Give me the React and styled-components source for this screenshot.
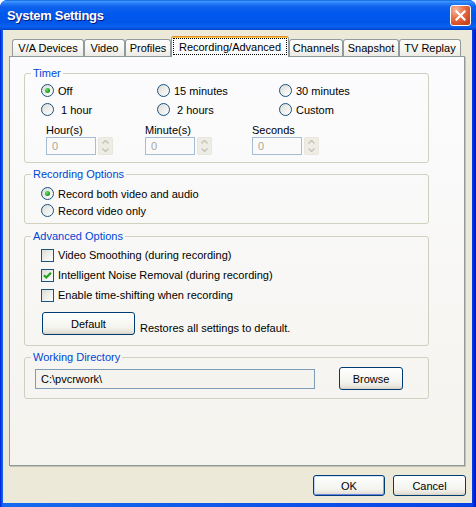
import React, { useState } from "react";
import styled, { createGlobalStyle, css } from "styled-components";

const GlobalStyle = createGlobalStyle`
  html, body { margin: 0; padding: 0; background: #fff; }
  body {
    font-family: "Liberation Sans", Arial, sans-serif;
    font-size: 11px;
    color: #000;
  }
  * { box-sizing: border-box; }
`;

const tabs = [
  { name: "V/A Devices", width: 72 },
  { name: "Video", width: 41 },
  { name: "Profiles", width: 46 },
  { name: "Recording/Advanced", width: 118 },
  { name: "Channels", width: 54 },
  { name: "Snapshot", width: 56 },
  { name: "TV Replay", width: 62 },
];

const timerOptions = [
  { id: "off", label: "Off" },
  { id: "15", label: "15 minutes" },
  { id: "30", label: "30 minutes" },
  { id: "1h", label: " 1 hour" },
  { id: "2h", label: " 2 hours" },
  { id: "custom", label: "Custom" },
];

const Radio = ({ checked, label, onClick }) => (
  <Option onClick={onClick}>
    <RadioCircle $checked={checked} />
    <span>{label}</span>
  </Option>
);

const Check = ({ checked, label, onClick }) => (
  <Option onClick={onClick}>
    <CheckBox>
      {checked && (
        <svg width="11" height="11" viewBox="0 0 11 11">
          <path d="M2 5.2 L4.3 7.5 L9 2.8" fill="none" stroke="#21a121" strokeWidth="2.2" />
        </svg>
      )}
    </CheckBox>
    <span>{label}</span>
  </Option>
);

const Spin = ({ label }) => (
  <SpinField>
    <SpinLabel>{label}</SpinLabel>
    <SpinRow>
      <SpinInput disabled value="0" readOnly />
      <SpinBox>
        <SpinHalf>
          <svg width="7" height="4" viewBox="0 0 7 4">
            <path d="M0.5 3.5 L3.5 0.5 L6.5 3.5" fill="none" stroke="#c6c3b4" strokeWidth="1.4" />
          </svg>
        </SpinHalf>
        <SpinHalf>
          <svg width="7" height="4" viewBox="0 0 7 4">
            <path d="M0.5 0.5 L3.5 3.5 L6.5 0.5" fill="none" stroke="#c6c3b4" strokeWidth="1.4" />
          </svg>
        </SpinHalf>
      </SpinBox>
    </SpinRow>
  </SpinField>
);

const App = () => {
  const [timer, setTimer] = useState("off");
  const [record, setRecord] = useState("both");
  const [checks, setChecks] = useState({ smooth: false, noise: true, shift: false });

  const toggle = (key) => setChecks({ ...checks, [key]: !checks[key] });

  return (
    <>
      <GlobalStyle />
      <Window>
        <TitleBar>
          <Title>System Settings</Title>
          <CloseButton>
            <svg width="11" height="11" viewBox="0 0 11 11">
              <path d="M1.5 1.5 L9.5 9.5 M9.5 1.5 L1.5 9.5" stroke="#fff" strokeWidth="2.2" strokeLinecap="square" />
            </svg>
          </CloseButton>
        </TitleBar>

        <Client>
          <TabStrip>
            {tabs.map((t) => (
              <Tab key={t.name} $width={t.width} $active={t.name === "Recording/Advanced"}>
                {t.name === "Recording/Advanced" ? <FocusText>{t.name}</FocusText> : t.name}
              </Tab>
            ))}
          </TabStrip>

          <Panel>
            <Group>
              <Legend>Timer</Legend>
              <GroupBody $pad="1px 0 7px 16px">
                <RadioGrid>
                  {timerOptions.map((o) => (
                    <Radio
                      key={o.id}
                      label={o.label}
                      checked={timer === o.id}
                      onClick={() => setTimer(o.id)}
                    />
                  ))}
                </RadioGrid>
                <SpinGrid>
                  <Spin label="Hour(s)" />
                  <Spin label="Minute(s)" />
                  <Spin label="Seconds" />
                </SpinGrid>
              </GroupBody>
            </Group>

            <Group $gap={5}>
              <Legend>Recording Options</Legend>
              <GroupBody $pad="4px 0 4px 16px">
                <Rows $row={17}>
                  <Radio
                    label="Record both video and audio"
                    checked={record === "both"}
                    onClick={() => setRecord("both")}
                  />
                  <Radio
                    label="Record video only"
                    checked={record === "video"}
                    onClick={() => setRecord("video")}
                  />
                </Rows>
              </GroupBody>
            </Group>

            <Group $gap={6}>
              <Legend>Advanced Options</Legend>
              <GroupBody $pad="2px 0 10px 16px">
                <Rows $row={20}>
                  <Check
                    label="Video Smoothing (during recording)"
                    checked={checks.smooth}
                    onClick={() => toggle("smooth")}
                  />
                  <Check
                    label="Intelligent Noise Removal (during recording)"
                    checked={checks.noise}
                    onClick={() => toggle("noise")}
                  />
                  <Check
                    label="Enable time-shifting when recording"
                    checked={checks.shift}
                    onClick={() => toggle("shift")}
                  />
                </Rows>
                <DefaultRow>
                  <Button $w={93} $h={23}>Default</Button>
                  <Hint>Restores all settings to default.</Hint>
                </DefaultRow>
              </GroupBody>
            </Group>

            <Group $gap={5}>
              <Legend>Working Directory</Legend>
              <GroupBody $pad="3px 0 8px 10px">
                <DirRow>
                  <DirInput value="C:\pvcrwork\" readOnly />
                  <Button $w={64} $h={23}>Browse</Button>
                </DirRow>
              </GroupBody>
            </Group>
          </Panel>

          <Footer>
            <Button $w={72} $h={21} $default>OK</Button>
            <Button $w={73} $h={21}>Cancel</Button>
          </Footer>
        </Client>
      </Window>
    </>
  );
};

export default App;

const Window = styled.div`
  width: 476px;
  height: 507px;
  display: flex;
  flex-direction: column;
  background: linear-gradient(to right, #0019cf 0, #0842e6 1px, #166aee 3px, #0842e6 472px, #0019cf 475px);
  border-radius: 7px 7px 0 0;
  overflow: hidden;
`;

const TitleBar = styled.div`
  height: 30px;
  flex: none;
  display: flex;
  align-items: center;
  justify-content: space-between;
  padding: 0 5px 0 7px;
  background: linear-gradient(
    to bottom,
    #0b5fd9 0%,
    #3d95ff 5%,
    #2b82fb 10%,
    #0e62ec 22%,
    #0058ee 45%,
    #0056e8 75%,
    #0861f0 88%,
    #0a52dc 95%,
    #003fc4 100%
  );
  border-radius: 7px 7px 0 0;
`;

const Title = styled.div`
  color: #fff;
  font-family: "Liberation Sans", Arial, sans-serif;
  font-weight: bold;
  font-size: 13px;
  letter-spacing: -0.3px;
  text-shadow: 1px 1px 0 #0a1883;
  padding-top: 1px;
`;

const CloseButton = styled.button`
  width: 21px;
  height: 21px;
  padding: 0;
  border: 1px solid #fff;
  border-radius: 3px;
  background: radial-gradient(circle at 25% 20%, #f8b79c 0%, #e8714a 40%, #d24a20 75%, #c03c16 100%);
  display: flex;
  align-items: center;
  justify-content: center;
`;

const Client = styled.div`
  flex: 1;
  margin: 0 4px 4px 3px;
  background: #ece9d8;
  padding: 6px 6px 0 6px;
  display: flex;
  flex-direction: column;
`;

const TabStrip = styled.div`
  display: flex;
  align-items: flex-end;
  height: 21px;
  padding-left: 3px;
  margin-bottom: -1px;
  position: relative;
  z-index: 1;
`;

const Tab = styled.div`
  width: ${(p) => p.$width}px;
  height: 17px;
  margin-bottom: 1px;
  border: 1px solid #919b9c;
  border-bottom: none;
  border-radius: 3px 3px 0 0;
  display: flex;
  align-items: center;
  justify-content: center;
  white-space: nowrap;
  background: linear-gradient(#ffffff, #f7f7f4 50%, #eceae4);

  ${(p) =>
    p.$active &&
    css`
      height: 21px;
      margin-bottom: 0;
      align-items: flex-start;
      padding-top: 1px;
      border-top: none;
      background: linear-gradient(#e68b2c 0, #e68b2c 1px, #ffc73c 1px, #ffc73c 2px, #fcfcfe 2px);
    `}
`;

const FocusText = styled.span`
  width: 114px;
  height: 17px;
  margin-top: 1px;
  border: 1px dotted #000;
  display: flex;
  align-items: center;
  justify-content: center;
`;

const Panel = styled.div`
  height: 410px;
  margin-right: 1px;
  border: 1px solid #919b9c;
  box-shadow: 1px 1px 0 #c5c2b2;
  background: linear-gradient(#fcfcfe, #f4f3ee);
  padding: 10px 0 0 14px;
  display: flex;
  flex-direction: column;
`;

const Group = styled.fieldset`
  width: 405px;
  min-width: 0;
  margin: ${(p) => p.$gap || 0}px 0 0 0;
  padding: 0;
  border: 1px solid #d0d0bf;
  border-radius: 3px;
`;

const Legend = styled.legend`
  color: #0046d5;
  margin-left: 6px;
  padding: 0 2px;
  line-height: 13px;
  font-size: 11px;
`;

const GroupBody = styled.div`
  padding: ${(p) => p.$pad};
  display: flex;
  flex-direction: column;
`;

const RadioGrid = styled.div`
  display: grid;
  grid-template-columns: 116px 122px auto;
  grid-auto-rows: 19px;
`;

const Rows = styled.div`
  display: grid;
  grid-auto-rows: ${(p) => p.$row}px;
`;

const Option = styled.div`
  display: flex;
  align-items: center;
  gap: 4px;
  white-space: pre;
  cursor: default;
  user-select: none;
`;

const RadioCircle = styled.span`
  width: 13px;
  height: 13px;
  flex: none;
  border-radius: 50%;
  border: 1px solid #1c5180;
  background: linear-gradient(135deg, #dcdcd6, #ffffff);
  display: flex;
  align-items: center;
  justify-content: center;

  &::after {
    content: "";
    width: 5px;
    height: 5px;
    border-radius: 50%;
    background: radial-gradient(circle at 35% 35%, #6be468, #21a121 60%, #188618);
    display: ${(p) => (p.$checked ? "block" : "none")};
  }
`;

const CheckBox = styled.span`
  width: 13px;
  height: 13px;
  flex: none;
  border: 1px solid #1c5180;
  background: linear-gradient(135deg, #dcdcd6, #ffffff);
  display: flex;
  align-items: center;
  justify-content: center;
`;

const SpinGrid = styled.div`
  display: grid;
  grid-template-columns: 99px 107px auto;
  margin: 5px 0 0 5px;
`;

const SpinField = styled.div`
  display: flex;
  flex-direction: column;
`;

const SpinLabel = styled.div`
  line-height: 13px;
`;

const SpinRow = styled.div`
  display: flex;
  gap: 2px;
`;

const SpinInput = styled.input`
  width: 50px;
  height: 18px;
  border: 1px solid #a7bdd6;
  background: transparent;
  padding: 0 0 0 5px;
  font: 11px "Liberation Sans", Arial, sans-serif;
  color: #aca899;
  -webkit-text-fill-color: #aca899;
  outline: none;
`;

const SpinBox = styled.div`
  width: 15px;
  height: 18px;
  display: flex;
  flex-direction: column;
  border-radius: 2px;
  background: #eeede5;
  border: 1px solid #e8e6dd;
`;

const SpinHalf = styled.div`
  flex: 1;
  display: flex;
  align-items: center;
  justify-content: center;
`;

const DefaultRow = styled.div`
  display: flex;
  align-items: flex-end;
  gap: 5px;
  margin: 7px 0 0 1px;
`;

const Hint = styled.span`
  line-height: 13px;
`;

const DirRow = styled.div`
  display: flex;
  align-items: center;
  gap: 24px;
  height: 23px;
`;

const DirInput = styled.input`
  width: 280px;
  height: 20px;
  border: 1px solid #7f9db9;
  background: #f4f3ee;
  padding: 0 0 0 5px;
  font: 11px "Liberation Sans", Arial, sans-serif;
  color: #000;
  outline: none;
`;

const Button = styled.button`
  width: ${(p) => p.$w}px;
  height: ${(p) => p.$h}px;
  padding: 0;
  border: 1px solid #003c74;
  border-radius: 3px;
  background: linear-gradient(#ffffff, #f3f3ee 70%, #e6e3d9 90%, #d6d0c5);
  font: 11px "Liberation Sans", Arial, sans-serif;
  color: #000;
  cursor: default;

  ${(p) =>
    p.$default &&
    css`
      box-shadow: inset 0 1px 0 #cee7ff, inset 1px 0 0 #bcd4f6, inset -1px 0 0 #89ade4, inset 0 -1px 0 #6982ee;
    `}
`;

const Footer = styled.div`
  display: flex;
  justify-content: flex-end;
  gap: 8px;
  margin-top: 9px;
`;
